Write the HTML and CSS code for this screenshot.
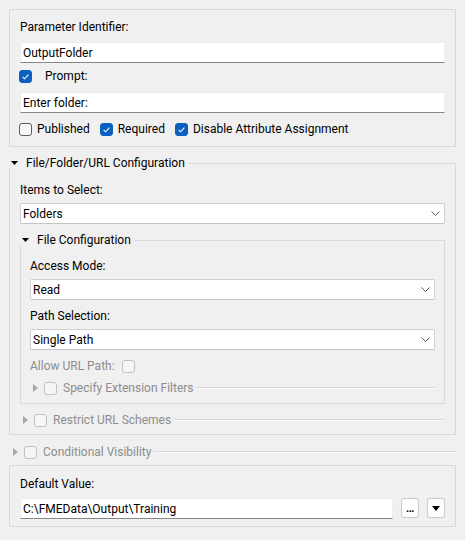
FILE: index.html
```html
<!DOCTYPE html>
<html>
<head>
<meta charset="utf-8">
<link rel="stylesheet" href="styles.css">
</head>
<body>
<div class="page">
  <div class="box top-box">
    <div class="lbl">Parameter Identifier:</div>
    <div class="field mt5">OutputFolder</div>
    <div class="cb-row mt3">
      <span class="cb on"><svg viewBox="0 0 13 13" width="13" height="13"><path d="M3.6 6.9 L5.6 8.8 L9.4 4.6" fill="none" stroke="#fff" stroke-width="1.1"/></svg></span>
      <span class="prompt-text">Prompt:</span>
    </div>
    <div class="field mt6">Enter folder:</div>
    <div class="cb-row mt6">
      <span class="cb"></span><span class="opt">Published</span>
      <span class="cb on gap-l"><svg viewBox="0 0 13 13" width="13" height="13"><path d="M3.6 6.9 L5.6 8.8 L9.4 4.6" fill="none" stroke="#fff" stroke-width="1.1"/></svg></span><span class="opt">Required</span>
      <span class="cb on gap-l"><svg viewBox="0 0 13 13" width="13" height="13"><path d="M3.6 6.9 L5.6 8.8 L9.4 4.6" fill="none" stroke="#fff" stroke-width="1.1"/></svg></span><span class="opt">Disable Attribute Assignment</span>
    </div>
  </div>

  <div class="sec mt6">
    <div class="sec-head">
      <svg class="tri-down" viewBox="0 0 7 4" width="7" height="4"><polygon points="0,0 7,0 3.5,4" fill="#000"/></svg>
      <span class="head-text">File/Folder/URL Configuration</span>
      <span class="head-rule"></span>
    </div>
    <div class="sec-body">
      <div class="lbl">Items to Select:</div>
      <div class="select mt3"><span>Folders</span><svg class="chev" viewBox="0 0 9 5" width="9" height="5"><polyline points="0.5,0.5 4.5,4.5 8.5,0.5" fill="none" stroke="#5a5a5a" stroke-width="1"/></svg></div>

      <div class="sec sub mt6">
        <div class="sec-head">
          <svg class="tri-down" viewBox="0 0 7 4" width="7" height="4"><polygon points="0,0 7,0 3.5,4" fill="#000"/></svg>
          <span class="head-text">File Configuration</span>
          <span class="head-rule"></span>
        </div>
        <div class="sec-body sub-body">
          <div class="lbl">Access Mode:</div>
          <div class="select mt3"><span>Read</span><svg class="chev" viewBox="0 0 9 5" width="9" height="5"><polyline points="0.5,0.5 4.5,4.5 8.5,0.5" fill="none" stroke="#5a5a5a" stroke-width="1"/></svg></div>
          <div class="lbl mt6">Path Selection:</div>
          <div class="select mt3"><span>Single Path</span><svg class="chev" viewBox="0 0 9 5" width="9" height="5"><polyline points="0.5,0.5 4.5,4.5 8.5,0.5" fill="none" stroke="#5a5a5a" stroke-width="1"/></svg></div>
          <div class="cb-row mt6">
            <span class="dis">Allow URL Path:</span>
            <span class="cb dis-cb allow-cb"></span>
          </div>
          <div class="fold-row mt2">
            <svg class="tri-right" viewBox="0 0 5 8" width="5" height="8"><polygon points="0,0 5,4 0,8" fill="#a8a8a8"/></svg>
            <span class="cb dis-cb"></span>
            <span class="dis fold-text">Specify Extension Filters</span>
            <span class="fold-rule"></span>
          </div>
        </div>
      </div>

      <div class="fold-row mt6">
        <svg class="tri-right" viewBox="0 0 5 8" width="5" height="8"><polygon points="0,0 5,4 0,8" fill="#a8a8a8"/></svg>
        <span class="cb dis-cb"></span>
        <span class="dis fold-text">Restrict URL Schemes</span>
        <span class="fold-rule"></span>
      </div>
    </div>
  </div>

  <div class="fold-row mt7 outer-fold">
    <svg class="tri-right" viewBox="0 0 5 8" width="5" height="8"><polygon points="0,0 5,4 0,8" fill="#a8a8a8"/></svg>
    <span class="cb dis-cb"></span>
    <span class="dis fold-text">Conditional Visibility</span>
    <span class="fold-rule"></span>
  </div>

  <div class="box default-box mt3">
    <div class="lbl">Default Value:</div>
    <div class="value-row mt4">
      <div class="field grow">C:\FMEData\Output\Training</div>
      <span class="btn dots">...</span>
      <span class="btn"><svg viewBox="0 0 8 5" width="8" height="5"><polygon points="0,0 8,0 4,5" fill="#000"/></svg></span>
    </div>
  </div>
</div>
</body>
</html>
```

FILE: styles.css
```css
body {
  margin: 0;
  background: #f0f0f0;
  font-family: Roboto, "Noto Sans", sans-serif;
  font-size: 12px;
  color: #000;
}

.page {
  padding: 9px 9px 0 9px;
}

.mt2 { margin-top: 2px; }
.mt3 { margin-top: 3px; }
.mt4 { margin-top: 4px; }
.mt5 { margin-top: 5px; }
.mt6 { margin-top: 6px; }
.mt7 { margin-top: 7px; }

.box {
  border: 1px solid #dadada;
}

.top-box {
  padding: 7px 10px;
}

.default-box {
  padding: 8px 10px 7px;
}

.lbl {
  height: 20px;
  display: flex;
  align-items: center;
}

.field {
  height: 21px;
  box-sizing: border-box;
  background: #fff;
  border: 1px solid #ececec;
  border-bottom-color: #868686;
  padding-left: 2px;
  display: flex;
  align-items: center;
  white-space: nowrap;
}

.grow { flex: 1; }

.cb-row {
  height: 20px;
  display: flex;
  align-items: center;
}

.cb {
  width: 13px;
  height: 13px;
  box-sizing: border-box;
  border: 1px solid #5e5e5e;
  border-radius: 3px;
  background: #f8f8f8;
  flex: none;
  display: flex;
  margin-left: -1px;
}

.cb svg { display: block; margin: -1px; }

.cb.on {
  background: #0b5fbf;
  border-color: #0b5fbf;
}

.dis-cb {
  border-color: #c2c2c2;
  background: #f6f6f6;
  margin-left: 0;
}

.prompt-text { margin-left: 13px; }
.opt { margin-left: 5px; }
.gap-l { margin-left: 10px; }

.sec-head {
  height: 20px;
  display: flex;
  align-items: center;
  padding-left: 2px;
}

.tri-down { flex: none; margin-right: 8px; }

.head-rule {
  flex: 1;
  align-self: stretch;
  margin-top: 10px;
  margin-left: 3px;
  border-top: 1px solid #dadada;
  border-right: 1px solid #dadada;
}

.sec-body {
  margin-top: -5px;
  border: 1px solid #dadada;
  border-top: none;
  padding: 12px 10px 4px;
}

.sub-body {
  padding: 11px 9px 5px;
}

.select {
  height: 21px;
  box-sizing: border-box;
  background: #fff;
  border: 1px solid #d0d0d0;
  border-bottom-color: #c4c4c4;
  border-radius: 2px;
  padding: 0 4px 0 2px;
  display: flex;
  align-items: center;
  justify-content: space-between;
}

.chev { display: block; }

.dis { color: #8d8d8d; }

.allow-cb { margin-left: 7px; }

.fold-row {
  height: 20px;
  display: flex;
  align-items: center;
  padding-left: 3px;
}

.outer-fold { padding-left: 4px; }

.tri-right { flex: none; margin-right: 6px; }

.fold-text { margin-left: 6px; white-space: nowrap; }

.fold-rule {
  flex: 1;
  margin-left: 3px;
  border-top: 1px solid #d8d8d8;
  border-bottom: 1px solid #fbfbfb;
}

.value-row {
  display: flex;
  align-items: flex-start;
}

.btn {
  width: 18px;
  height: 20px;
  box-sizing: border-box;
  margin-left: 8px;
  background: #fdfdfd;
  border: 1px solid #cccccc;
  border-radius: 3px;
  display: flex;
  align-items: center;
  justify-content: center;
  flex: none;
}

.dots {
  align-items: flex-end;
  font-weight: bold;
  line-height: 14px;
  letter-spacing: -0.5px;
  font-size: 11px;
  padding-bottom: 1px;
}
```
